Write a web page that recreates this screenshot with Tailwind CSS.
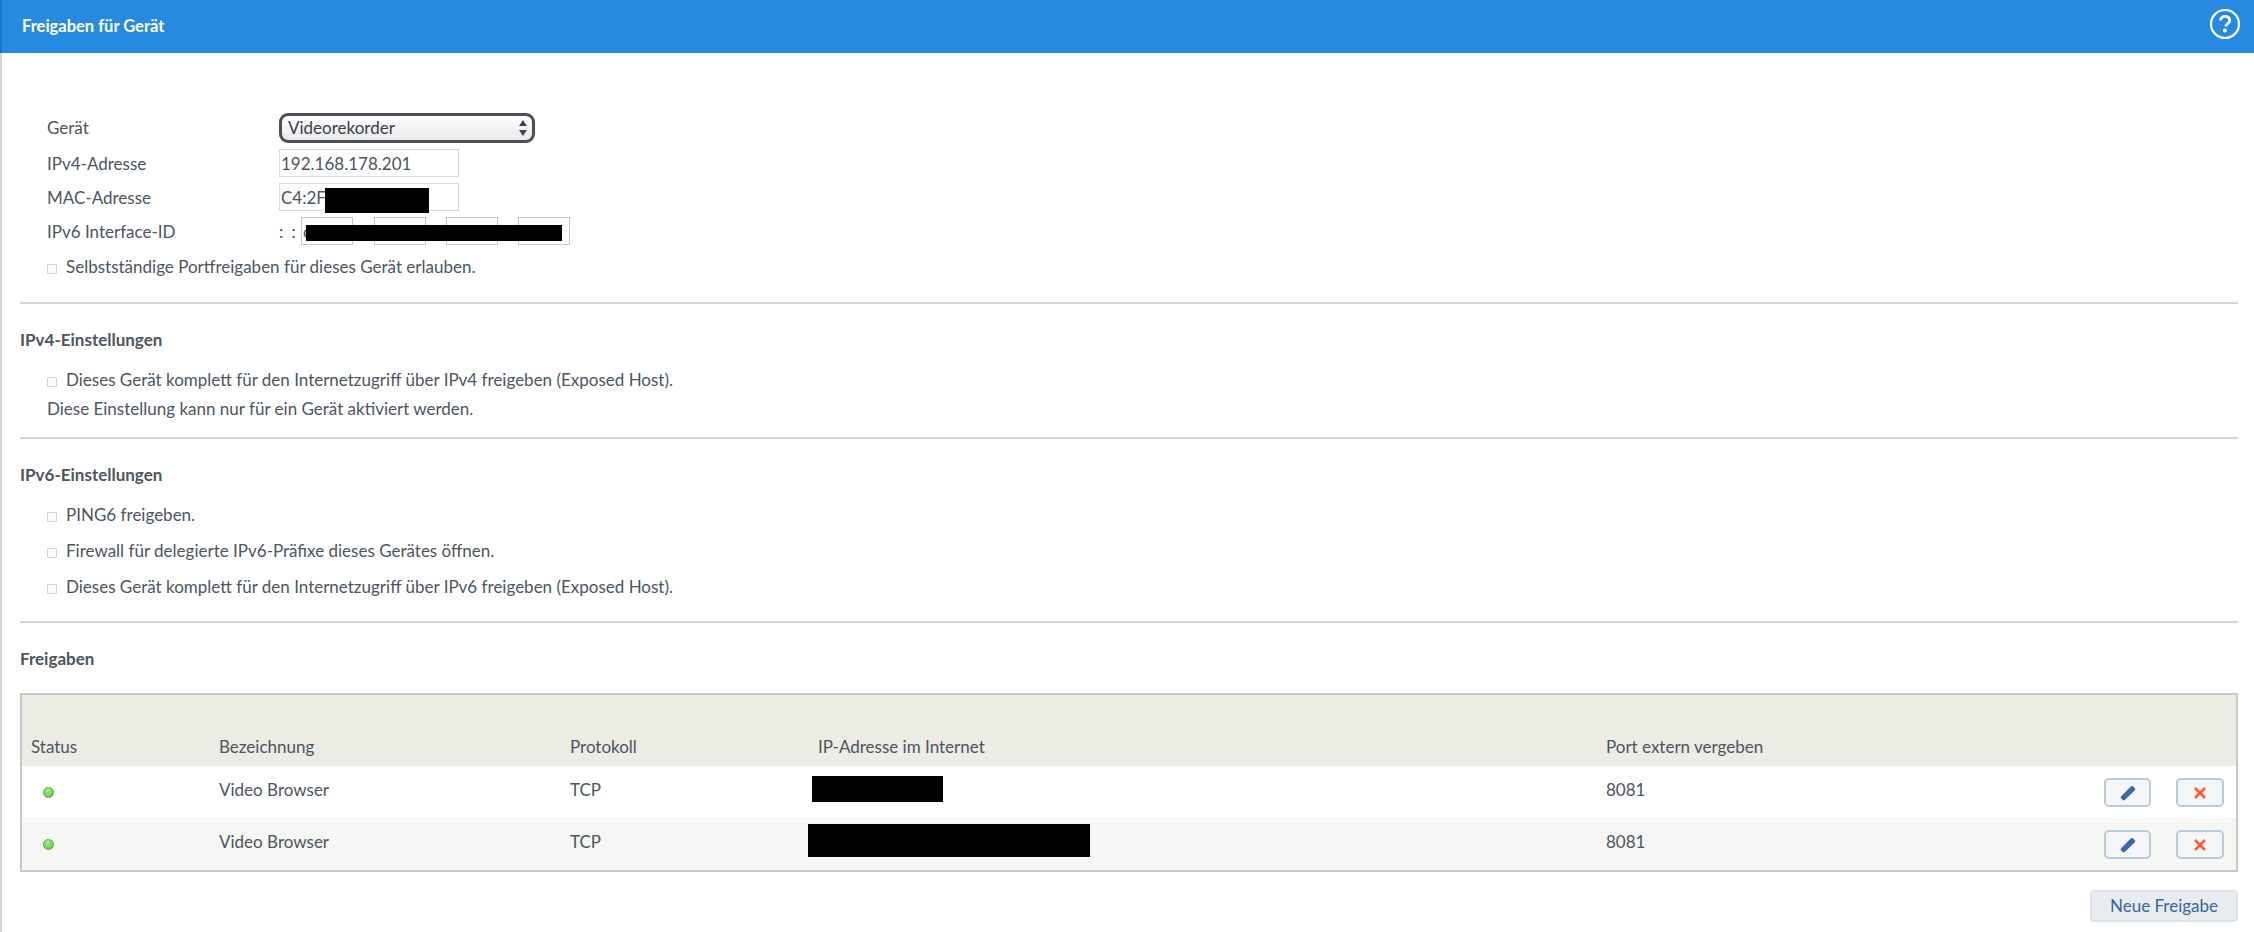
<!DOCTYPE html>
<html lang="de">
<head>
    <meta charset="UTF-8">
    <title>Freigaben für Gerät</title>
    <script src="https://cdn.jsdelivr.net/npm/@tailwindcss/browser@4"></script>
</head>
<body class="font-['Lato','Open_Sans',sans-serif] text-[17px] text-[#4d5560] bg-white h-[932px] overflow-hidden">

    <header class="h-[53px] bg-[#268be0] border-l-2 border-[#1c74c4] flex items-center justify-between pl-[20px] pr-[13px]">
        <h1 class="text-white text-[16.5px] font-bold leading-none">Freigaben für Gerät</h1>
        <svg class="mb-[5px]" width="32" height="32" viewBox="0 0 32 32">
            <circle cx="16" cy="16" r="14" fill="none" stroke="white" stroke-width="2.2"/>
            <path d="M11.5 12.6c0-2.7 2-4.3 4.6-4.3 2.7 0 4.6 1.6 4.6 3.9 0 1.8-1 2.7-2.3 3.6-1.1.8-1.5 1.3-1.5 2.6" fill="none" stroke="white" stroke-width="2.8"/>
            <circle cx="15.9" cy="22.6" r="2" fill="white"/>
        </svg>
    </header>

    <main class="border-l-2 border-[#d9d7d0] h-[879px] pl-[18px] pr-[16px]">
        <section class="pt-[60px] pl-[27px] flex flex-col gap-[6px] h-[249px]">
            <div class="flex items-center h-[30px]">
                <span class="w-[232px]">Gerät</span>
                <div class="w-[256px] h-[30px] border-[3px] border-[#4b5058] rounded-[9px] bg-gradient-to-b from-white to-[#e9e9e9] flex items-center justify-between pl-[6px] pr-[4px] text-[#3a3f46]">
                    <span>Videorekorder</span>
                    <svg width="10" height="18" viewBox="0 0 10 18"><path d="M5 1l4 6H1zM5 17l4-6H1z" fill="#40454c"/></svg>
                </div>
            </div>
            <div class="flex items-center h-[28px]">
                <span class="w-[232px] pt-[2px]">IPv4-Adresse</span>
                <div class="w-[180px] h-[28px] border border-[#dcdcdc] pl-[1px] pt-[2px] flex items-center">192.168.178.201</div>
            </div>
            <div class="flex items-center h-[28px]">
                <span class="w-[232px] pt-[2px]">MAC-Adresse</span>
                <div class="relative w-[180px] h-[28px] border border-[#dcdcdc] pl-[1px] pt-[2px] flex items-center">
                    C4:2F:
                    <div class="absolute left-[45px] top-[4px] w-[104px] h-[25px] bg-black"></div>
                </div>
            </div>
            <div class="flex items-center h-[28px]">
                <span class="w-[232px] pt-[2px]">IPv6 Interface-ID</span>
                <div class="relative flex items-center h-[28px]">
                    <span class="w-[22px] tracking-[2px] pt-[2px]">: :</span>
                    <div class="w-[52px] h-[28px] border border-[#c8c8c8] pl-[1px] pt-[2px] flex items-center">c</div>
                    <div class="w-[52px] h-[28px] border border-[#c8c8c8] ml-[21px]"></div>
                    <div class="w-[52px] h-[28px] border border-[#c8c8c8] ml-[20px]"></div>
                    <div class="w-[52px] h-[28px] border border-[#c8c8c8] ml-[20px]"></div>
                    <div class="absolute left-[27px] top-[8px] w-[256px] h-[16px] bg-black"></div>
                </div>
            </div>
            <label class="flex items-center h-[24px] mt-[4px]">
                <span class="w-[10px] h-[10px] mt-[4px] border border-[#d4d4d4] bg-[#fbfbfb] rounded-[1px] mr-[9px]"></span>
                Selbstständige Portfreigaben für dieses Gerät erlauben.
            </label>
        </section>

        <hr class="border-0 h-[2px] bg-[#d6d6d6]">

        <section class="h-[133px] pt-[24px]">
            <h2 class="font-bold h-[24px] leading-[24px]">IPv4-Einstellungen</h2>
            <label class="flex items-center h-[24px] mt-[16px] pl-[27px]">
                <span class="w-[10px] h-[10px] mt-[4px] border border-[#d4d4d4] bg-[#fbfbfb] rounded-[1px] mr-[9px]"></span>
                Dieses Gerät komplett für den Internetzugriff über IPv4 freigeben (Exposed Host).
            </label>
            <p class="h-[24px] leading-[24px] mt-[5px] pl-[27px]">Diese Einstellung kann nur für ein Gerät aktiviert werden.</p>
        </section>

        <hr class="border-0 h-[2px] bg-[#d6d6d6]">

        <section class="h-[182px] pt-[24px]">
            <h2 class="font-bold h-[24px] leading-[24px]">IPv6-Einstellungen</h2>
            <div class="flex flex-col gap-[12px] mt-[16px] pl-[27px]">
                <label class="flex items-center h-[24px]">
                    <span class="w-[10px] h-[10px] mt-[4px] border border-[#d4d4d4] bg-[#fbfbfb] rounded-[1px] mr-[9px]"></span>
                    PING6 freigeben.
                </label>
                <label class="flex items-center h-[24px]">
                    <span class="w-[10px] h-[10px] mt-[4px] border border-[#d4d4d4] bg-[#fbfbfb] rounded-[1px] mr-[9px]"></span>
                    Firewall für delegierte IPv6-Präfixe dieses Gerätes öffnen.
                </label>
                <label class="flex items-center h-[24px]">
                    <span class="w-[10px] h-[10px] mt-[4px] border border-[#d4d4d4] bg-[#fbfbfb] rounded-[1px] mr-[9px]"></span>
                    Dieses Gerät komplett für den Internetzugriff über IPv6 freigeben (Exposed Host).
                </label>
            </div>
        </section>

        <hr class="border-0 h-[2px] bg-[#d6d6d6]">

        <h2 class="font-bold h-[24px] leading-[24px] mt-[24px]">Freigaben</h2>

        <div class="mt-[22px] border-2 border-[#c9c9c1]">
            <div class="h-[71px] bg-[#ecebe4] flex items-end pb-[7px] pl-[9px]">
                <span class="w-[188px]">Status</span>
                <span class="w-[351px]">Bezeichnung</span>
                <span class="w-[248px]">Protokoll</span>
                <span class="w-[788px]">IP-Adresse im Internet</span>
                <span>Port extern vergeben</span>
            </div>
            <div class="relative h-[52px] bg-white flex items-center pl-[21px] pb-[4px]">
                <span class="w-[11px] h-[11px] mt-[4px] rounded-full bg-radial-[at_40%_25%] from-[#a4ee86] to-[#56c238] border border-[#4fae3a]"></span>
                <span class="ml-[165px] w-[351px]">Video Browser</span>
                <span class="w-[248px]">TCP</span>
                <span class="w-[788px]"></span>
                <span>8081</span>
                <div class="absolute left-[790px] top-[10px] w-[131px] h-[26px] bg-black"></div>
                <div class="absolute right-[12px] top-[12px] flex gap-[25px]">
                    <button class="w-[47px] h-[29px] rounded-[5px] border-2 border-[#b9ccd9] bg-[#f5f6f7] flex items-center justify-center">
                        <svg width="16" height="16" viewBox="0 0 16 16"><path d="M0 16l1-4.6L10.8 1.6c.8-.8 1.7-.8 2.4-.1l1.5 1.5c.7.7.7 1.6-.1 2.4L4.800 15zM0 16l3-.8-2.200-2.200z" fill="#3c67a8"/></svg>
                    </button>
                    <button class="w-[48px] h-[29px] rounded-[5px] border-2 border-[#b9ccd9] bg-[#f5f6f7] flex items-center justify-center">
                        <svg width="12" height="12" viewBox="0 0 12 12"><path d="M1 1l10 10M11 1L1 11" stroke="#ff5a33" stroke-width="2.600"/></svg>
                    </button>
                </div>
            </div>
            <div class="relative h-[52px] bg-[#f6f6f4] flex items-center pl-[21px] pb-[4px]">
                <span class="w-[11px] h-[11px] mt-[4px] rounded-full bg-radial-[at_40%_25%] from-[#a4ee86] to-[#56c238] border border-[#4fae3a]"></span>
                <span class="ml-[165px] w-[351px]">Video Browser</span>
                <span class="w-[248px]">TCP</span>
                <span class="w-[788px]"></span>
                <span>8081</span>
                <div class="absolute left-[786px] top-[6px] w-[282px] h-[33px] bg-black"></div>
                <div class="absolute right-[12px] top-[12px] flex gap-[25px]">
                    <button class="w-[47px] h-[29px] rounded-[5px] border-2 border-[#b9ccd9] bg-[#f5f6f7] flex items-center justify-center">
                        <svg width="16" height="16" viewBox="0 0 16 16"><path d="M0 16l1-4.6L10.8 1.6c.8-.8 1.7-.8 2.4-.1l1.5 1.5c.7.7.7 1.6-.1 2.4L4.800 15zM0 16l3-.8-2.200-2.200z" fill="#3c67a8"/></svg>
                    </button>
                    <button class="w-[48px] h-[29px] rounded-[5px] border-2 border-[#b9ccd9] bg-[#f5f6f7] flex items-center justify-center">
                        <svg width="12" height="12" viewBox="0 0 12 12"><path d="M1 1l10 10M11 1L1 11" stroke="#ff5a33" stroke-width="2.600"/></svg>
                    </button>
                </div>
            </div>
        </div>

        <div class="flex justify-end mt-[18px]">
            <button class="w-[148px] h-[32px] rounded-[4px] border-2 border-[#dbe2e8] bg-[#e8ecf0] text-[#3b64a0]">Neue Freigabe</button>
        </div>
    </main>
</body>
</html>
